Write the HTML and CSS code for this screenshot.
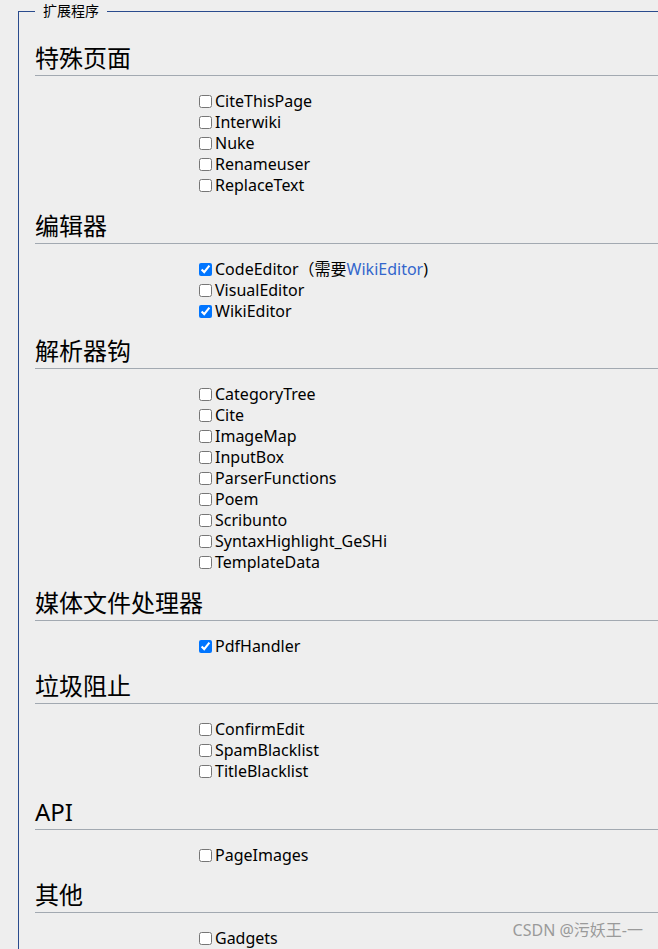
FILE: index.html
```html
<!DOCTYPE html>
<html lang="zh-CN">
  <head>
    <meta charset="UTF-8" />
    <meta name="viewport" content="width=device-width, initial-scale=1.0" />
    <title>扩展程序</title>
    <link rel="stylesheet" href="styles.css">
  </head>
  <body>
    <fieldset class="ext-box">
      <legend>扩展程序</legend>

      <!-- 特殊页面 -->
      <h2>特殊页面</h2>
      <ul class="ext-list">
        <li><label><input type="checkbox" />CiteThisPage</label></li>
        <li><label><input type="checkbox" />Interwiki</label></li>
        <li><label><input type="checkbox" />Nuke</label></li>
        <li><label><input type="checkbox" />Renameuser</label></li>
        <li><label><input type="checkbox" />ReplaceText</label></li>
      </ul>

      <!-- 编辑器 -->
      <h2>编辑器</h2>
      <ul class="ext-list">
        <li><label><input type="checkbox" checked />CodeEditor</label><span class="dep">（需要<a href="#">WikiEditor</a>)</span></li>
        <li><label><input type="checkbox" />VisualEditor</label></li>
        <li><label><input type="checkbox" checked />WikiEditor</label></li>
      </ul>

      <!-- 解析器钩 -->
      <h2>解析器钩</h2>
      <ul class="ext-list">
        <li><label><input type="checkbox" />CategoryTree</label></li>
        <li><label><input type="checkbox" />Cite</label></li>
        <li><label><input type="checkbox" />ImageMap</label></li>
        <li><label><input type="checkbox" />InputBox</label></li>
        <li><label><input type="checkbox" />ParserFunctions</label></li>
        <li><label><input type="checkbox" />Poem</label></li>
        <li><label><input type="checkbox" />Scribunto</label></li>
        <li><label><input type="checkbox" />SyntaxHighlight_GeSHi</label></li>
        <li><label><input type="checkbox" />TemplateData</label></li>
      </ul>

      <!-- 媒体文件处理器 -->
      <h2>媒体文件处理器</h2>
      <ul class="ext-list">
        <li><label><input type="checkbox" checked />PdfHandler</label></li>
      </ul>

      <!-- 垃圾阻止 -->
      <h2>垃圾阻止</h2>
      <ul class="ext-list">
        <li><label><input type="checkbox" />ConfirmEdit</label></li>
        <li><label><input type="checkbox" />SpamBlacklist</label></li>
        <li><label><input type="checkbox" />TitleBlacklist</label></li>
      </ul>

      <!-- API -->
      <h2>API</h2>
      <ul class="ext-list">
        <li><label><input type="checkbox" />PageImages</label></li>
      </ul>

      <!-- 其他 -->
      <h2>其他</h2>
      <ul class="ext-list">
        <li><label><input type="checkbox" />Gadgets</label></li>
      </ul>
    </fieldset>

    <div class="watermark">CSDN @污妖王-一</div>
  </body>
</html>
```

FILE: styles.css
```css
/* Basic Reset */
html,
body {
  margin: 0;
  padding: 0;
  overflow: hidden;
}

body {
  background-color: #eeeeee;
  color: #000000;
  font-family: "Noto Sans", "Noto Sans CJK SC", sans-serif;
  font-size: 16px;
  padding: 1px 0 0 18px;
  height: 949px;
  box-sizing: border-box;
}

.ext-box {
  border: 1px solid #2a4b8d;
  border-right: 0;
  margin: 0;
  padding: 8px 0 0 16px;
  min-width: 0;
}

.ext-box legend {
  font-size: 14px;
  line-height: 20px;
  padding: 0 8px;
}

/* Section headings */
.ext-box h2 {
  font-size: 24px;
  font-weight: normal;
  line-height: 31px;
  margin: 13.5px 0 0;
  padding-bottom: 2px;
  border-bottom: 1px solid #a2a9b1;
}

.ext-box h2:first-of-type {
  margin-top: 13px;
}

/* Extension lists */
.ext-list {
  list-style: none;
  margin: 15px 0 0;
  padding: 0 0 0 164px;
}

.ext-list li {
  line-height: 21px;
  height: 21px;
  white-space: nowrap;
}

.ext-list input {
  width: 13px;
  height: 13px;
  margin: 0 3px 0 0;
  vertical-align: -1px;
}

.dep a {
  color: #3366cc;
  text-decoration: none;
}

/* Watermark */
.watermark {
  position: absolute;
  right: 15px;
  bottom: 8px;
  font-size: 16px;
  color: #9a9a9a;
}
```
